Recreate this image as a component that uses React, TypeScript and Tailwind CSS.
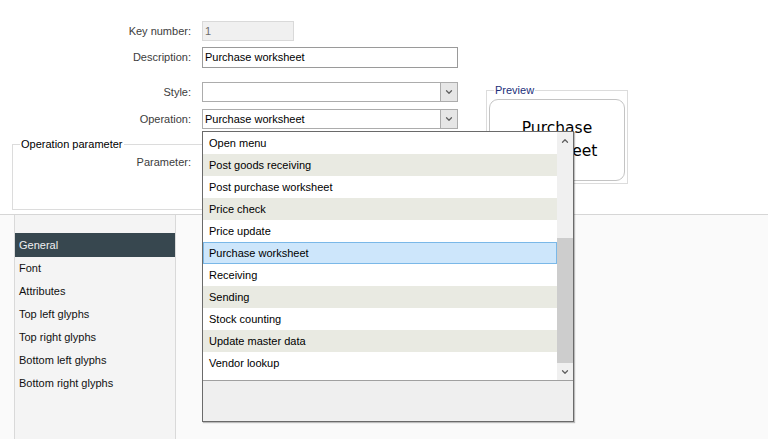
import { ChevronDown, ChevronUp } from 'lucide-react';

const operations = [
  'Open menu',
  'Post goods receiving',
  'Post purchase worksheet',
  'Price check',
  'Price update',
  'Purchase worksheet',
  'Receiving',
  'Sending',
  'Stock counting',
  'Update master data',
  'Vendor lookup',
];

const sections = [
  'General',
  'Font',
  'Attributes',
  'Top left glyphs',
  'Top right glyphs',
  'Bottom left glyphs',
  'Bottom right glyphs',
];

const Label = ({ text }: { text: string }) => (
  <span className="w-[202px] pr-[11px] text-right text-[#3c3c3c]">{text}</span>
);

const Combo = ({ value }: { value: string }) => (
  <div className="flex h-[20px] w-[256px] items-stretch border border-[#acacac] bg-white">
    <span className="flex-1 pl-[2px] leading-[18px] text-black">{value}</span>
    <span className="flex w-[17px] items-center justify-center border-l border-[#acacac] bg-[#e6e6e6]">
      <ChevronDown size={10} strokeWidth={3} className="text-[#606060]" />
    </span>
  </div>
);

const App = () => {
  const selected = 'Purchase worksheet';

  return (
    <div className="relative h-[439px] w-[768px] overflow-hidden bg-[#fafafa] font-['Liberation_Sans',Arial,sans-serif] text-[11px]">
      {/* top form */}
      <div className="flex h-[214px] bg-white">
        <div className="flex w-[470px] flex-col pt-[21px]">
          <div className="flex items-center">
            <Label text="Key number:" />
            <div className="h-[20px] w-[92px] border border-[#d9d9d9] bg-[#f0f0f0] pl-[2px] leading-[18px] text-[#6d6d6d]">
              1
            </div>
          </div>
          <div className="mt-[6px] flex items-center">
            <Label text="Description:" />
            <div className="h-[21px] w-[256px] border border-[#9a9a9a] bg-white pl-[2px] leading-[19px] text-black">
              Purchase worksheet
            </div>
          </div>
          <div className="mt-[14px] flex items-center">
            <Label text="Style:" />
            <Combo value="" />
          </div>
          <div className="mt-[7px] flex items-center">
            <Label text="Operation:" />
            <Combo value="Purchase worksheet" />
          </div>
          <fieldset className="ml-[12px] mt-[7px] h-[74px] w-[458px] border border-[#dcdcdc] px-[7px] pb-0 pt-0">
            <legend className="px-[1px] text-black">Operation parameter</legend>
            <div className="mt-[1px] flex items-center">
              <span className="w-[171px] text-right text-[#3c3c3c]">Parameter:</span>
            </div>
          </fieldset>
        </div>
        <fieldset className="ml-[16px] mt-[82px] h-[102px] w-[142px] border border-[#dcdcdc] px-[2px] pb-[2px] pt-0">
          <legend className="ml-[5px] px-[1px] text-[#1c2f7a]">Preview</legend>
          <div className="flex h-[82px] flex-col items-center justify-center rounded-[9px] border border-[#c4c4c4] font-['DejaVu_Sans',sans-serif] text-[15.5px] leading-[23px] text-black">
            <span>Purchase</span>
            <span>worksheet</span>
          </div>
        </fieldset>
      </div>

      {/* bottom area */}
      <div className="flex h-[225px] border-t border-[#d6d6d6]">
        <div className="ml-[14px] flex w-[162px] flex-col border-x border-[#d9d9d9] bg-[#f4f4f4] pt-[18px]">
          {sections.map((s) => (
            <div
              key={s}
              className={`pl-[4px] ${
                s === 'General'
                  ? 'h-[24px] bg-[#37474f] leading-[24px] text-[#eef0f1]'
                  : 'h-[23px] leading-[23px] text-[#111]'
              }`}
            >
              {s}
            </div>
          ))}
        </div>
      </div>

      {/* open dropdown list */}
      <div className="absolute left-[202px] top-[131px] flex h-[291px] w-[372px] flex-col border border-[#6a6a6a] bg-white shadow-[1px_1px_1px_rgba(0,0,0,0.25)]">
        <div className="flex h-[248px]">
          <div className="flex-1">
            {operations.map((op, i) => (
              <div
                key={op}
                className={`h-[22px] pl-[5px] leading-[20px] text-black ${
                  op === selected
                    ? 'border border-[#7ab8e8] bg-[#cde6fb] pl-[4px]'
                    : i % 2 === 1
                      ? 'border border-transparent bg-[#e9eae2]'
                      : 'border border-transparent bg-white'
                }`}
              >
                {op}
              </div>
            ))}
          </div>
          <div className="flex w-[16px] flex-col bg-[#f0f0f0]">
            <div className="flex h-[18px] items-center justify-center">
              <ChevronUp size={10} strokeWidth={3} className="text-[#606060]" />
            </div>
            <div className="flex-1 pt-[88px]">
              <div className="h-full bg-[#cdcdcd]" />
            </div>
            <div className="flex h-[17px] items-center justify-center">
              <ChevronDown size={10} strokeWidth={3} className="text-[#606060]" />
            </div>
          </div>
        </div>
        <div className="flex-1 border-t border-[#a0a0a0] bg-[#efefef]" />
      </div>
    </div>
  );
};

export default App;
